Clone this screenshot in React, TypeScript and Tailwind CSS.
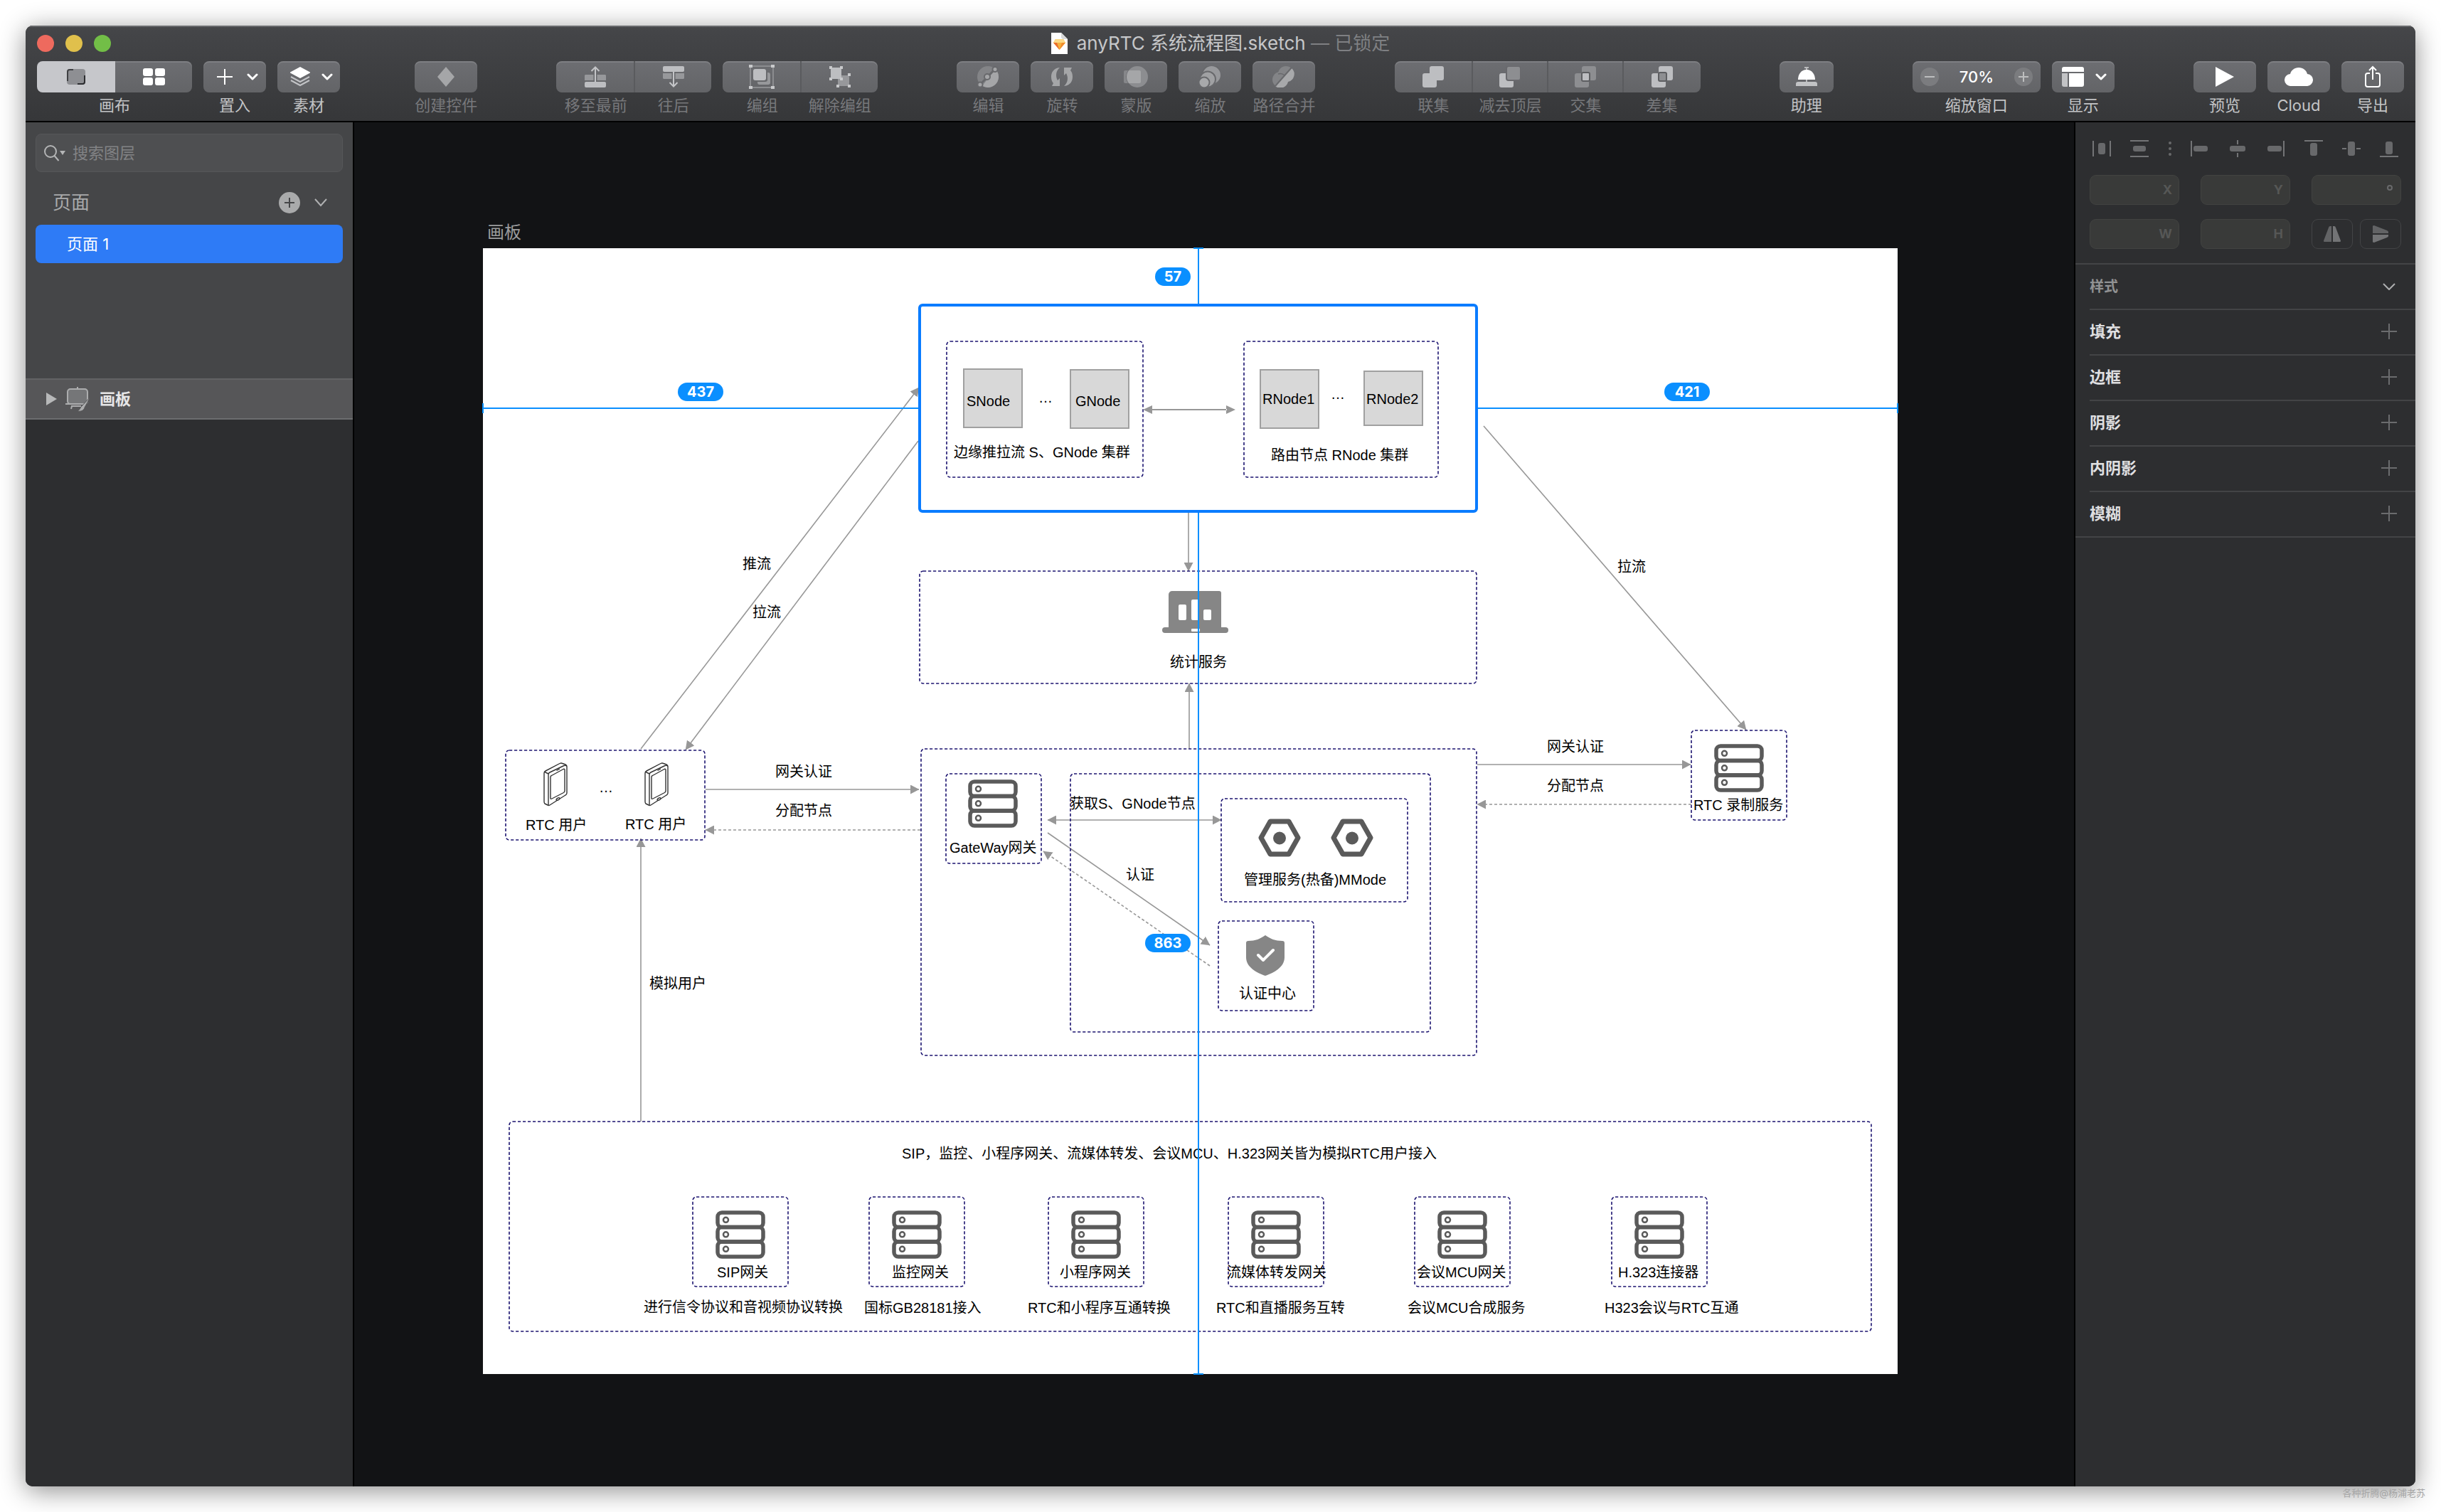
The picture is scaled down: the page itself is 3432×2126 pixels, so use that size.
import type { ReactNode } from "react";

const UI_FONT = "font-['Inter','Noto_Sans_CJK_SC',sans-serif]";
const DIAGRAM_FONT = "font-['Liberation_Sans','Noto_Sans_CJK_SC',sans-serif]";
const TILE = "flex h-11 w-full items-center bg-linear-to-b from-[#6d6e72] to-[#636467] shadow-[inset_0_2px_0_rgba(255,255,255,0.12)]";

/* ---------- toolbar ---------- */

function Tool({
  label,
  width = "w-[88px]",
  shape = "rounded-[8px]",
  dim = false,
  children,
}: {
  label: string;
  width?: string;
  shape?: string;
  dim?: boolean;
  children: ReactNode;
}) {
  return (
    <button type="button" disabled={dim} className={`flex flex-col items-center gap-1.5 ${width}`}>
      <span className={`${TILE} justify-center ${shape}`}>{children}</span>
      <span className={`text-[22px] leading-6 whitespace-nowrap ${dim ? "text-[#77787b]" : "text-[#c3c4c6]"}`}>{label}</span>
    </button>
  );
}

function Chevron() {
  return (
    <svg width="16" height="10" viewBox="0 0 16 10" fill="none" stroke="#fff" strokeWidth="3" strokeLinecap="round" strokeLinejoin="round">
      <path d="M2 2l6 6 6-6" />
    </svg>
  );
}

function CanvasIcon() {
  return (
    <svg width="28" height="24" viewBox="0 0 28 24">
      <rect x="1" y="1" width="26" height="22" rx="4" fill="#8e8f93" />
      <path d="M2 18V5a3 3 0 0 1 3-3h5" fill="none" stroke="#3f4043" strokeWidth="2" />
      <path d="M26 10v9a3 3 0 0 1-3 3h-7" fill="none" stroke="#2c2d30" strokeWidth="2" />
    </svg>
  );
}

function GridIcon() {
  return (
    <svg width="31" height="24" viewBox="0 0 31 24" fill="#fff">
      <rect width="14" height="11" rx="3" />
      <rect x="17" width="14" height="11" rx="3" />
      <rect y="13" width="14" height="11" rx="3" />
      <rect x="17" y="13" width="14" height="11" rx="3" />
    </svg>
  );
}

function PlusIcon() {
  return (
    <svg width="22" height="22" viewBox="0 0 22 22" stroke="#fff" strokeWidth="2">
      <path d="M11 0v22M0 11h22" />
    </svg>
  );
}

function LayersIcon() {
  return (
    <svg width="28" height="28" viewBox="0 0 28 28">
      <path d="M14 0l13 7a1 1 0 0 1 0 2l-13 7L1 9a1 1 0 0 1 0-2z" fill="#fff" />
      <path d="M1 14l13 7 13-7M1 19l13 7 13-7" fill="none" stroke="#c2c3c6" strokeWidth="2" />
    </svg>
  );
}

function DiamondIcon() {
  return (
    <svg width="24" height="28" viewBox="0 0 24 28" fill="#a5a6a8">
      <path d="M12 0l12 14-12 14L0 14z" />
    </svg>
  );
}

function ForwardIcon() {
  return (
    <svg width="30" height="30" viewBox="0 0 30 30">
      <path d="M1 12h11.500v8H0v-7zM17.500 12H29l1 1v7H17.500z" fill="#97989b" />
      <rect y="22" width="30" height="8" rx="2" fill="#bdbec1" />
      <path d="M15 22V2M9.500 7L15 1.500 20.500 7" fill="none" stroke="#c4c5c8" strokeWidth="2" />
    </svg>
  );
}

function BackwardIcon() {
  return (
    <svg width="30" height="30" viewBox="0 0 30 30">
      <rect width="30" height="8" rx="2" fill="#bdbec1" />
      <path d="M0 10h12.500v8H1l-1-1zM17.500 10H30v7l-1 1H17.500z" fill="#97989b" />
      <path d="M15 8v20M9.500 23l5.500 5.500 5.500-5.500" fill="none" stroke="#c4c5c8" strokeWidth="2" />
    </svg>
  );
}

function GroupIcon() {
  return (
    <svg width="36" height="34" viewBox="0 0 36 34">
      <path d="M2 2h32v30H2z" fill="none" stroke="#8b8c8f" strokeWidth="2" />
      <path d="M26 11h1a3 3 0 0 1 3 3v11a3 3 0 0 1-3 3H15a3 3 0 0 1-3-3v-1h11a3 3 0 0 0 3-3z" fill="#97989b" />
      <rect x="6" y="6" width="18" height="16" rx="3" fill="#bdbec1" />
      <path d="M0 0h5v4H0zM31 0h5v4h-5zM0 30h5v4H0zM31 30h5v4h-5z" fill="#c8c9cb" />
    </svg>
  );
}

function UngroupIcon() {
  return (
    <svg width="30" height="30" viewBox="0 0 30 30">
      <rect x="12" y="13" width="16" height="15" rx="3" fill="#97989b" />
      <rect x="2" y="2" width="15" height="16" rx="3" fill="#bdbec1" />
      <path d="M0 0h4v4H0zM15 0h4v4h-4zM0 16h4v4H0zM15 16h4v4h-4zM26 10h4v4h-4zM10 26h4v4h-4zM26 26h4v4h-4z" fill="#c8c9cb" />
    </svg>
  );
}

function EditIcon() {
  return (
    <svg width="30" height="30" viewBox="0 0 30 30">
      <circle cx="15" cy="15" r="15" fill="#838487" />
      <path d="M28 7.500A15 15 0 0 1 7 27.700L25 5z" fill="#a5a6a8" />
      <path d="M4 26L25 4" stroke="#68696c" strokeWidth="3" />
      <g fill="#a5a6a8" stroke="#68696c" strokeWidth="2">
        <circle cx="14" cy="15" r="4" />
        <circle cx="25" cy="4.500" r="3.500" />
        <circle cx="4" cy="26" r="3.500" />
      </g>
    </svg>
  );
}

function RotateIcon() {
  return (
    <svg width="32" height="28" viewBox="0 0 32 28" fill="#a5a6a8">
      <path d="M13 1C4 2 1 8 1 14c0 4 1 7 3 9l-2 4h11V16l-3 3C7 14 7 6 13 1z" />
      <path d="M19 27c9-1 12-7 12-13 0-4-1-7-3-9l2-4H19v11l3-3c3 5 3 13-3 18z" />
    </svg>
  );
}

function MaskIcon() {
  return (
    <svg width="34" height="30" viewBox="0 0 34 30">
      <path d="M2 6h4a16 16 0 0 0 0 18H2a2 2 0 0 1-2-2V8a2 2 0 0 1 2-2z" fill="#86878a" />
      <circle cx="19" cy="15" r="15" fill="#8c8d90" />
      <path d="M7 6h15a2 2 0 0 1 2 2v14a2 2 0 0 1-2 2H7a15 15 0 0 1 0-18z" fill="#a5a6a8" />
    </svg>
  );
}

function ScaleIcon() {
  return (
    <svg width="30" height="30" viewBox="0 0 30 30" stroke="#68696c" strokeWidth="2">
      <circle cx="17.500" cy="12.500" r="13.500" fill="#98999c" />
      <circle cx="12" cy="18.500" r="11" fill="#a0a1a3" />
      <circle cx="7" cy="23" r="7.500" fill="#a8a9ab" />
    </svg>
  );
}

function FlattenIcon() {
  return (
    <svg width="32" height="30" viewBox="0 0 32 30">
      <circle cx="19" cy="11" r="11" fill="#838487" />
      <circle cx="11" cy="19" r="11" fill="#838487" />
      <path d="M8 11c6-2 11 2 12 8" fill="none" stroke="#68696c" strokeWidth="1.500" />
      <path d="M27 3a11 11 0 0 1-5 19A11 11 0 0 1 4 28z" fill="#a8a9ab" />
      <path d="M27 2L4 28" stroke="#68696c" strokeWidth="2" />
    </svg>
  );
}

function BooleanIcon({ mode }: { mode: "union" | "subtract" | "intersect" | "difference" }) {
  const light = "#bdbec1";
  const dark = "#8d8e91";
  const back = mode === "union" || mode === "difference" ? light : dark;
  const front = mode === "intersect" ? dark : light;
  return (
    <svg width="30" height="30" viewBox="0 0 30 30">
      {mode === "subtract" ? (
        <>
          <rect y="10" width="20" height="20" rx="3" fill={front} />
          <rect x="10" width="20" height="20" rx="3" fill={back} stroke="#69696d" strokeWidth="2" />
        </>
      ) : (
        <>
          <rect x="10" width="20" height="20" rx="3" fill={back} />
          <rect y="10" width="20" height="20" rx="3" fill={front} />
          {mode !== "union" && (
            <rect x="10" y="9" width="11" height="12" rx="2" fill={mode === "intersect" ? light : dark} stroke="#5d5e61" strokeWidth="2" />
          )}
        </>
      )}
    </svg>
  );
}

function BellIcon() {
  return (
    <svg width="30" height="28" viewBox="0 0 30 28">
      <path d="M12 0h6v2h-2v3h-2V2h-2z" fill="#b9babc" />
      <path d="M15 4c8 0 12 7 12 14H3C3 11 7 4 15 4z" fill="#fff" />
      <path d="M14 18h2v3h-2z" fill="#b9babc" />
      <path d="M3 21h24a3 3 0 0 1 3 3v3H0v-3a3 3 0 0 1 3-3z" fill="#c2c3c5" />
    </svg>
  );
}

function ViewIcon() {
  return (
    <svg width="31" height="28" viewBox="0 0 31 28">
      <path d="M3 0h25a3 3 0 0 1 3 3v4H0V3a3 3 0 0 1 3-3z" fill="#fff" />
      <path d="M0 9h8v19H3a3 3 0 0 1-3-3z" fill="#c2c3c5" />
      <path d="M10 9h21v16a3 3 0 0 1-3 3H10z" fill="#fff" />
    </svg>
  );
}

function PlayIcon() {
  return (
    <svg width="28" height="28" viewBox="0 0 28 28" fill="#fff">
      <path d="M1 0l26 14L1 28z" />
    </svg>
  );
}

function CloudIcon() {
  return (
    <svg width="40" height="26" viewBox="0 0 40 26" fill="#fff">
      <path d="M9 26a8.500 8.500 0 0 1-1-17C9 4 14 0 20 0s11 4 12 9a8.500 8.500 0 0 1-1 17z" />
    </svg>
  );
}

function ShareIcon() {
  return (
    <svg width="24" height="32" viewBox="0 0 24 32" fill="none" stroke="#fff" strokeWidth="2">
      <path d="M8 11H5a3 3 0 0 0-3 3v13a3 3 0 0 0 3 3h14a3 3 0 0 0 3-3V14a3 3 0 0 0-3-3h-3M12 20V3M7 7l5-5 5 5" />
    </svg>
  );
}

function SketchFileIcon() {
  return (
    <svg width="24" height="32" viewBox="0 0 24 32">
      <path d="M0 1h14l9 9v21H0z" fill="#fff" />
      <path d="M14 1l9 9h-7l-2-2z" fill="#d9d9d9" />
      <path d="M6 10h11l3 5-8.500 10L3 15z" fill="#f6b13c" />
      <path d="M6 10h11l3 5H3z" fill="#fbd986" />
      <path d="M3 15h5l3.500 10z" fill="#ea6c2d" />
      <path d="M20 15h-5l-3.500 10z" fill="#f08b2c" />
    </svg>
  );
}

function Toolbar() {
  return (
    <header className="flex h-[136px] shrink-0 flex-col border-b-2 border-black bg-linear-to-b from-[#454649] to-[#363739] shadow-[inset_0_2px_0_#67686b]">
      <div className="relative flex h-[50px] items-center justify-center">
        <div className="absolute left-4 flex gap-4">
          <button type="button" aria-label="关闭" className="size-6 rounded-full bg-[#ee6a5e]" />
          <button type="button" aria-label="最小化" className="size-6 rounded-full bg-[#e0c04c]" />
          <button type="button" aria-label="缩放" className="size-6 rounded-full bg-[#72be47]" />
        </div>
        <h1 className="flex items-center gap-3 text-[26px] leading-8 text-[#c6c7c9]">
          <SketchFileIcon />
          <span>
            anyRTC 系统流程图.sketch <span className="text-[#7f8083]">— 已锁定</span>
          </span>
        </h1>
      </div>
      <div className="flex justify-between px-4">
        <div className="mr-[-6px] flex gap-4">
          <div role="group" aria-label="画布" className="flex w-[218px] flex-col items-center gap-1.5">
            <div className="flex w-full">
              <button type="button" aria-label="画布视图" className="flex h-11 w-[110px] items-center justify-center rounded-l-[8px] bg-[#c6c7cb]">
                <CanvasIcon />
              </button>
              <button type="button" aria-label="组件视图" className="flex h-11 w-[108px] items-center justify-center rounded-r-[8px] bg-linear-to-b from-[#6d6e72] to-[#636467] shadow-[inset_0_2px_0_rgba(255,255,255,0.12)]">
                <GridIcon />
              </button>
            </div>
            <span className="text-[22px] leading-6 text-[#c3c4c6]">画布</span>
          </div>
          <Tool label="置入">
            <span className="flex items-center gap-5 pl-2">
              <PlusIcon />
              <Chevron />
            </span>
          </Tool>
          <Tool label="素材">
            <span className="flex items-center gap-4 pl-2">
              <LayersIcon />
              <Chevron />
            </span>
          </Tool>
        </div>
        <Tool label="创建控件" dim>
          <DiamondIcon />
        </Tool>
        <div className="flex gap-4">
          <div className="flex">
            <Tool label="移至最前" dim width="w-[111px]" shape="rounded-l-[8px] border-r-2 border-[#5a5b5e]">
              <ForwardIcon />
            </Tool>
            <Tool label="往后" dim width="w-[107px]" shape="rounded-r-[8px]">
              <BackwardIcon />
            </Tool>
          </div>
          <div className="flex">
            <Tool label="编组" dim width="w-[111px]" shape="rounded-l-[8px] border-r-2 border-[#5a5b5e]">
              <GroupIcon />
            </Tool>
            <Tool label="解除编组" dim width="w-[107px]" shape="rounded-r-[8px]">
              <UngroupIcon />
            </Tool>
          </div>
        </div>
        <div className="flex gap-4">
          <Tool label="编辑" dim>
            <EditIcon />
          </Tool>
          <Tool label="旋转" dim>
            <RotateIcon />
          </Tool>
          <Tool label="蒙版" dim>
            <MaskIcon />
          </Tool>
          <Tool label="缩放" dim>
            <ScaleIcon />
          </Tool>
          <Tool label="路径合并" dim>
            <FlattenIcon />
          </Tool>
        </div>
        <div className="flex">
          <Tool label="联集" dim width="w-[110px]" shape="rounded-l-[8px] border-r-2 border-[#5a5b5e]">
            <BooleanIcon mode="union" />
          </Tool>
          <Tool label="减去顶层" dim width="w-[106px]" shape="border-r-2 border-[#5a5b5e]">
            <BooleanIcon mode="subtract" />
          </Tool>
          <Tool label="交集" dim width="w-[106px]" shape="border-r-2 border-[#5a5b5e]">
            <BooleanIcon mode="intersect" />
          </Tool>
          <Tool label="差集" dim width="w-[108px]" shape="rounded-r-[8px]">
            <BooleanIcon mode="difference" />
          </Tool>
        </div>
        <Tool label="助理" width="w-[76px]">
          <BellIcon />
        </Tool>
        <div className="flex gap-4">
          <div role="group" aria-label="缩放窗口" className="flex w-[180px] flex-col items-center gap-1.5">
            <div className={`${TILE} justify-between rounded-[8px] px-[11px]`}>
              <button type="button" aria-label="缩小" className="flex size-[26px] items-center justify-center rounded-full bg-[#7b7c7f]">
                <svg width="14" height="14" viewBox="0 0 14 14" stroke="#bdbebf" strokeWidth="2">
                  <path d="M0 7h14" />
                </svg>
              </button>
              <span className="text-[22px] leading-6 font-medium text-white">70%</span>
              <button type="button" aria-label="放大" className="flex size-[26px] items-center justify-center rounded-full bg-[#7b7c7f]">
                <svg width="14" height="14" viewBox="0 0 14 14" stroke="#bdbebf" strokeWidth="2">
                  <path d="M0 7h14M7 0v14" />
                </svg>
              </button>
            </div>
            <span className="text-[22px] leading-6 text-[#c3c4c6]">缩放窗口</span>
          </div>
          <Tool label="显示">
            <span className="flex items-center gap-4 pl-1">
              <ViewIcon />
              <Chevron />
            </span>
          </Tool>
        </div>
        <div className="flex gap-4">
          <Tool label="预览">
            <PlayIcon />
          </Tool>
          <Tool label="Cloud">
            <CloudIcon />
          </Tool>
          <Tool label="导出">
            <ShareIcon />
          </Tool>
        </div>
      </div>
    </header>
  );
}

/* ---------- left sidebar ---------- */

function Sidebar() {
  return (
    <aside className="flex w-[462px] shrink-0 flex-col border-r-2 border-black bg-[#2d2e30]">
      <div className="flex h-[360px] flex-col bg-[#454648] px-[14px] pt-4">
        <label className="flex h-[54px] items-center gap-2 rounded-[8px] border border-[#565759] bg-[#4e4f51] px-[11px]">
          <svg width="32" height="24" viewBox="0 0 32 24" fill="none" stroke="#b4b5b6" strokeWidth="2">
            <circle cx="9" cy="10" r="8" />
            <path d="M14.500 16l6 7" />
            <path d="M22 9h8l-4 6z" fill="#b4b5b6" stroke="none" />
          </svg>
          <input type="search" aria-label="搜索图层" placeholder="搜索图层" className="min-w-0 flex-1 bg-transparent text-[22px] leading-8 text-white outline-none placeholder:text-[#828385]" />
        </label>
        <div className="flex h-[74px] items-center justify-between pt-3 pr-[22px] pl-6">
          <h2 className="text-[26px] leading-8 text-[#a9aaab]">页面</h2>
          <div className="flex items-center gap-5">
            <button type="button" aria-label="添加页面">
              <svg width="30" height="30" viewBox="0 0 30 30">
                <circle cx="15" cy="15" r="15" fill="#a9aaab" />
                <path d="M15 8v14M8 15h14" stroke="#454648" strokeWidth="2" />
              </svg>
            </button>
            <button type="button" aria-label="收起页面">
              <svg width="18" height="12" viewBox="0 0 18 12" fill="none" stroke="#b0b1b2" strokeWidth="2">
                <path d="M1 1l8 9 8-9" />
              </svg>
            </button>
          </div>
        </div>
        <button type="button" className="flex h-[54px] items-center rounded-[8px] bg-[#2e7bf6] px-11 text-[22px] leading-8 text-white">页面 1</button>
      </div>
      <button type="button" className="flex h-[58px] items-center border-y-2 border-t-[#626365] border-b-[#6c6d6f] bg-[#565658] pl-7">
        <svg width="16" height="18" viewBox="0 0 16 18" fill="#b7b8b9">
          <path d="M1 0l15 9-15 9z" />
        </svg>
        <svg className="ml-3" width="36" height="36" viewBox="0 0 36 36">
          <rect x="3" y="4" width="28" height="21" rx="4" fill="#757678" stroke="#acadae" strokeWidth="2" />
          <path d="M17 1v3M0 25h26M8 28h14M9 28l-1 4" stroke="#acadae" strokeWidth="2" fill="none" />
          <path d="M35 15l-12 13c-2 1-2 5-6 7 5 1 9-1 10-5z" fill="#acadae" stroke="#565658" strokeWidth="1" />
        </svg>
        <span className="ml-3 text-[22px] leading-8 font-bold text-[#e6e6e7]">画板</span>
      </button>
    </aside>
  );
}

/* ---------- canvas ---------- */

function DashedBox({ at }: { at: string }) {
  return (
    <div className={`absolute ${at}`}>
      <svg className="block size-full overflow-visible">
        <rect x="0" y="0" width="100%" height="100%" rx="5" fill="none" stroke="#1c1470" strokeWidth="1.600" strokeDasharray="4.200 2.800" />
      </svg>
    </div>
  );
}

function Label({ at, children }: { at: string; children: ReactNode }) {
  return <span className={`absolute text-[20px] leading-6 whitespace-nowrap text-black ${at}`}>{children}</span>;
}

function NodeSquare({ at }: { at: string }) {
  return <div className={`absolute border-2 border-[#a0a0a0] bg-[#d8d8d8] ${at}`} />;
}

function Badge({ at, children }: { at: string; children: ReactNode }) {
  return (
    <span className={`absolute flex h-[26px] items-center justify-center rounded-full bg-[#0a8fff] font-['Inter',sans-serif] text-[20px] leading-6 font-bold text-white ${at}`}>
      {children}
    </span>
  );
}

function ServerIcon({ at }: { at: string }) {
  return (
    <svg className={`absolute ${at}`} width="70" height="68" viewBox="0 0 70 68" fill="none" stroke="#5a5a5a">
      <rect x="3" y="3" width="64" height="20.500" rx="6" strokeWidth="5.500" />
      <rect x="3" y="23.500" width="64" height="20.500" rx="6" strokeWidth="5.500" />
      <rect x="3" y="44" width="64" height="21" rx="6" strokeWidth="5.500" />
      <g strokeWidth="2.500">
        <circle cx="14.500" cy="13.300" r="3.500" />
        <circle cx="14.500" cy="33.800" r="3.500" />
        <circle cx="14.500" cy="54.300" r="3.500" />
      </g>
    </svg>
  );
}

function PhoneIcon({ at }: { at: string }) {
  return (
    <svg className={`absolute ${at}`} width="34" height="62" viewBox="0 0 34 62" fill="#fff" stroke="#333" strokeWidth="1.400" strokeLinejoin="round">
      <path d="M1 15q0-2 2-3L23 1.500q2-1 4 0l4 1.500q2 1 2 3V43q0 2-2 3L9 60q-1.500 1-3 0L2 58q-1-1-1-3z" />
      <path d="M7 60V17q0-2 2-3L29 4.500q3-1 4 1M7 16l-5-2.500" fill="none" />
      <path d="M10 20.500q0-1.500 1.500-2L28 9.500q2-.8 2 1V40q0 1.500-1.500 2.500L12 51q-2 1-2-1z" />
      <path d="M18.500 11.500l4.500-2.500M18 52.500q0-1.500 2.500-2.500 2-1 2.500.5 0 1.500-2.500 2.500-2 1-2.500-.5z" />
    </svg>
  );
}

function HexIcon({ at }: { at: string }) {
  return (
    <svg className={`absolute ${at}`} width="60" height="54" viewBox="0 0 60 54">
      <path d="M17 4h26l13 23-13 23H17L4 27z" fill="none" stroke="#5a5a5a" strokeWidth="7" strokeLinejoin="round" />
      <circle cx="30" cy="27.500" r="9" fill="#5a5a5a" />
    </svg>
  );
}

function StatsIcon({ at }: { at: string }) {
  return (
    <svg className={`absolute ${at}`} width="93" height="60" viewBox="0 0 93 60" fill="#868686">
      <path d="M14 0h66a3 3 0 0 1 3 3v51H9V5a5 5 0 0 1 5-5z" />
      <rect y="51" width="93" height="8" rx="4" />
      <g fill="#fff">
        <rect x="23" y="19" width="11" height="22" rx="2" />
        <rect x="41" y="12" width="11" height="29" rx="2" />
        <rect x="58" y="26" width="11" height="15" rx="2" />
        <rect x="41" y="53" width="12" height="4" rx="1" />
      </g>
    </svg>
  );
}

function ShieldIcon({ at }: { at: string }) {
  return (
    <svg className={`absolute ${at}`} width="56" height="57" viewBox="0 0 56 57">
      <path d="M28 0c7 5 14 8 24 8q3 0 3 3v20c0 14-15 22-27 26C16 53 1 45 1 31V11q0-3 3-3c10 0 17-3 24-8z" fill="#868686" />
      <path d="M18 28l7 7 14-14" fill="none" stroke="#fff" strokeWidth="4" strokeLinecap="round" strokeLinejoin="round" />
    </svg>
  );
}

function Connectors() {
  return (
    <svg className="absolute inset-0 size-full" viewBox="0 0 1989 1583" fill="none" stroke="#979797" strokeWidth="1.600">
      <defs>
        <marker id="arrow" markerUnits="userSpaceOnUse" markerWidth="13" markerHeight="13" refX="12" refY="6.500" orient="auto-start-reverse">
          <path d="M0 0l12.500 6.500L0 13z" fill="#979797" stroke="none" />
        </marker>
      </defs>
      <g markerEnd="url(#arrow)">
        <path d="M222 704L613 196" />
        <path d="M612 271L285 705" />
        <path d="M1407 250L1776 677" />
        <path d="M992 372v82" />
        <path d="M993 704v-92" />
        <path d="M313 761h300" />
        <path d="M1398 726h300" />
        <path d="M222 1228V830" />
        <path d="M794 822l228 158" />
        <path d="M615 818H313" strokeDasharray="4 3" />
        <path d="M1699 782h-301" strokeDasharray="4 3" />
        <path d="M1022 1009L788 848" strokeDasharray="4 3" />
        <path d="M794 804h244" markerStart="url(#arrow)" />
      </g>
    </svg>
  );
}

function Guides() {
  return (
    <svg className="absolute inset-0 size-full overflow-visible" viewBox="0 0 1989 1583" fill="none" stroke="#0a8fff" strokeWidth="2">
      <path d="M1006 0v78M999 0h14M1006 372v1211M999 1583h14" />
      <path d="M0 225h612M0 218v14M1399 225h590M1989 218v14" />
    </svg>
  );
}

function Diagram() {
  return (
    <div className={`relative h-[1583px] w-[1989px] bg-white ${DIAGRAM_FONT}`}>
      <Connectors />

      <div className="absolute top-[78px] left-[612px] h-[294px] w-[787px] rounded-[6px] border-4 border-[#0a7cff] bg-white" />
      <DashedBox at="left-[652px] top-[131px] w-[276px] h-[191px]" />
      <DashedBox at="left-[1070px] top-[131px] w-[273px] h-[191px]" />
      <NodeSquare at="left-[675px] top-[169px] size-[84px]" />
      <NodeSquare at="left-[825px] top-[170px] size-[84px]" />
      <NodeSquare at="left-[1092px] top-[170px] size-[84px]" />
      <NodeSquare at="left-[1238px] top-[172px] w-[84px] h-[78px]" />
      <Label at="left-[680px] top-[203px]">SNode</Label>
      <Label at="left-[781px] top-[198px]">…</Label>
      <Label at="left-[833px] top-[203px]">GNode</Label>
      <Label at="left-[1096px] top-[200px]">RNode1</Label>
      <Label at="left-[1192px] top-[193px]">…</Label>
      <Label at="left-[1242px] top-[200px]">RNode2</Label>
      <Label at="left-[662px] top-[275px]">边缘推拉流 S、GNode 集群</Label>
      <Label at="left-[1108px] top-[279px]">路由节点 RNode 集群</Label>
      <svg className="absolute top-[220px] left-[928px]" width="130" height="14" viewBox="0 0 130 14" fill="#979797">
        <path d="M0 7l13-6v12zM130 7l-13-6v12zM12 6h106v2H12z" />
      </svg>

      <DashedBox at="left-[614px] top-[454px] w-[783px] h-[158px]" />
      <StatsIcon at="left-[955px] top-[482px]" />
      <Label at="left-[966px] top-[570px]">统计服务</Label>

      <Label at="left-[365px] top-[432px]">推流</Label>
      <Label at="left-[379px] top-[500px]">拉流</Label>
      <Label at="left-[1595px] top-[436px]">拉流</Label>

      <DashedBox at="left-[32px] top-[706px] w-[280px] h-[126px]" />
      <PhoneIcon at="left-[85px] top-[723px]" />
      <PhoneIcon at="left-[227px] top-[723px]" />
      <Label at="left-[163px] top-[746px]">…</Label>
      <Label at="left-[60px] top-[799px]">RTC 用户</Label>
      <Label at="left-[200px] top-[798px]">RTC 用户</Label>
      <Label at="left-[411px] top-[724px]">网关认证</Label>
      <Label at="left-[411px] top-[779px]">分配节点</Label>
      <Label at="left-[234px] top-[1022px]">模拟用户</Label>

      <DashedBox at="left-[616px] top-[704px] w-[781px] h-[431px]" />
      <DashedBox at="left-[651px] top-[739px] w-[134px] h-[126px]" />
      <ServerIcon at="left-[682px] top-[747px]" />
      <Label at="left-[656px] top-[831px]">GateWay网关</Label>
      <DashedBox at="left-[826px] top-[739px] w-[506px] h-[363px]" />
      <Label at="left-[825px] top-[769px]">获取S、GNode节点</Label>
      <DashedBox at="left-[1038px] top-[774px] w-[262px] h-[145px]" />
      <HexIcon at="left-[1090px] top-[802px]" />
      <HexIcon at="left-[1192px] top-[802px]" />
      <Label at="left-[1070px] top-[876px]">管理服务(热备)MMode</Label>
      <Label at="left-[904px] top-[869px]">认证</Label>
      <DashedBox at="left-[1034px] top-[946px] w-[134px] h-[126px]" />
      <ShieldIcon at="left-[1072px] top-[966px]" />
      <Label at="left-[1063px] top-[1036px]">认证中心</Label>

      <Label at="left-[1496px] top-[689px]">网关认证</Label>
      <Label at="left-[1496px] top-[744px]">分配节点</Label>
      <DashedBox at="left-[1699px] top-[678px] w-[134px] h-[126px]" />
      <ServerIcon at="left-[1731px] top-[697px]" />
      <Label at="left-[1702px] top-[771px]">RTC 录制服务</Label>

      <DashedBox at="left-[37px] top-[1228px] w-[1915px] h-[295px]" />
      <Label at="left-[589px] top-[1261px]">SIP，监控、小程序网关、流媒体转发、会议MCU、H.323网关皆为模拟RTC用户接入</Label>

      <DashedBox at="left-[295px] top-[1334px] w-[134px] h-[126px]" />
      <ServerIcon at="left-[327px] top-[1353px]" />
      <Label at="left-[329px] top-[1428px]">SIP网关</Label>
      <Label at="left-[226px] top-[1477px]">进行信令协议和音视频协议转换</Label>

      <DashedBox at="left-[543px] top-[1334px] w-[134px] h-[126px]" />
      <ServerIcon at="left-[575px] top-[1353px]" />
      <Label at="left-[575px] top-[1428px]">监控网关</Label>
      <Label at="left-[536px] top-[1478px]">国标GB28181接入</Label>

      <DashedBox at="left-[795px] top-[1334px] w-[134px] h-[126px]" />
      <ServerIcon at="left-[827px] top-[1353px]" />
      <Label at="left-[811px] top-[1428px]">小程序网关</Label>
      <Label at="left-[766px] top-[1478px]">RTC和小程序互通转换</Label>

      <DashedBox at="left-[1048px] top-[1334px] w-[134px] h-[126px]" />
      <ServerIcon at="left-[1080px] top-[1353px]" />
      <Label at="left-[1046px] top-[1428px]">流媒体转发网关</Label>
      <Label at="left-[1031px] top-[1478px]">RTC和直播服务互转</Label>

      <DashedBox at="left-[1310px] top-[1334px] w-[134px] h-[126px]" />
      <ServerIcon at="left-[1342px] top-[1353px]" />
      <Label at="left-[1313px] top-[1428px]">会议MCU网关</Label>
      <Label at="left-[1300px] top-[1478px]">会议MCU合成服务</Label>

      <DashedBox at="left-[1587px] top-[1334px] w-[134px] h-[126px]" />
      <ServerIcon at="left-[1619px] top-[1353px]" />
      <Label at="left-[1596px] top-[1428px]">H.323连接器</Label>
      <Label at="left-[1577px] top-[1478px]">H323会议与RTC互通</Label>

      <Guides />
      <Badge at="left-[945px] top-[27px] w-[50px]">57</Badge>
      <Badge at="left-[274px] top-[189px] w-[64px]">437</Badge>
      <Badge at="left-[1661px] top-[189px] w-[64px]">421</Badge>
      <Badge at="left-[931px] top-[964px] w-[64px]">863</Badge>
    </div>
  );
}

/* ---------- inspector ---------- */

const ALIGN_ICONS = [
  { name: "水平分布", lines: "M1 1v22M25 1v22", block: [8, 4, 10, 16] },
  { name: "垂直分布", lines: "M0 1h26M0 23h26", block: [4, 8, 18, 8] },
  { name: "左对齐", lines: "M1 1v22", block: [4, 8, 20, 8] },
  { name: "水平居中", lines: "M13 0v6M13 18v6", block: [2, 8, 22, 8] },
  { name: "右对齐", lines: "M25 1v22", block: [2, 8, 20, 8] },
  { name: "顶部对齐", lines: "M0 1h26", block: [8, 4, 10, 18] },
  { name: "垂直居中", lines: "M0 12h6M20 12h6", block: [8, 2, 10, 20] },
  { name: "底部对齐", lines: "M0 23h26", block: [8, 2, 10, 18] },
];

function AlignButton({ icon }: { icon: (typeof ALIGN_ICONS)[number] }) {
  const [x, y, w, h] = icon.block;
  return (
    <button type="button" disabled aria-label={icon.name}>
      <svg width="26" height="24" viewBox="0 0 26 24">
        <path d={icon.lines} stroke="#737476" strokeWidth="2" />
        <rect x={x} y={y} width={w} height={h} rx="3" fill="#68696b" />
      </svg>
    </button>
  );
}

function Field({ label, name }: { label: string; name: string }) {
  return (
    <label className="flex h-[42px] items-center rounded-[9px] border border-[#424341] bg-[#393a39] pr-[9px] pl-3 font-['Inter',sans-serif] text-[18px] leading-6 font-bold text-[#565756]">
      <input type="text" disabled aria-label={name} className="w-0 min-w-0 flex-1 bg-transparent outline-none" />
      {label}
    </label>
  );
}

function Inspector() {
  return (
    <aside className="w-[480px] shrink-0 border-l-2 border-black bg-[#2d2e30]">
      <div className="h-[200px] border-b-2 border-[#434446] px-5 pt-[25px]">
        <div className="flex items-center justify-between pr-1 pl-1">
          <AlignButton icon={ALIGN_ICONS[0]} />
          <AlignButton icon={ALIGN_ICONS[1]} />
          <svg width="4" height="22" viewBox="0 0 4 22" fill="#68696b">
            <circle cx="2" cy="3" r="2" />
            <circle cx="2" cy="11" r="2" />
            <circle cx="2" cy="19" r="2" />
          </svg>
          {ALIGN_ICONS.slice(2).map((icon) => (
            <AlignButton key={icon.name} icon={icon} />
          ))}
        </div>
        <div className="mt-[25px] grid grid-cols-3 gap-x-[30px] gap-y-5">
          <Field label="X" name="X 坐标" />
          <Field label="Y" name="Y 坐标" />
          <label className="flex h-[42px] items-center rounded-[9px] border border-[#424341] bg-[#393a39] pr-[10px] pl-3">
            <input type="text" disabled aria-label="旋转角度" className="w-0 min-w-0 flex-1 bg-transparent outline-none" />
            <svg width="10" height="16" viewBox="0 0 10 16" fill="none" stroke="#68696b" strokeWidth="2">
              <circle cx="5" cy="5" r="3" />
            </svg>
          </label>
          <Field label="W" name="宽度" />
          <Field label="H" name="高度" />
          <div className="grid grid-cols-2 gap-[10px]">
            <button type="button" disabled aria-label="水平翻转" className="flex h-[42px] items-center justify-center rounded-[9px] border border-[#434446]">
              <svg width="24" height="22" viewBox="0 0 24 22">
                <path d="M9 0h2v22H1q-1 0-1-1.500L7 2q.5-2 2-2z" fill="#626365" />
                <path d="M15 0h-2v22h10q1 0 1-1.500L17 2q-.5-2-2-2z" fill="#737476" />
              </svg>
            </button>
            <button type="button" disabled aria-label="垂直翻转" className="flex h-[42px] items-center justify-center rounded-[9px] border border-[#434446]">
              <svg width="22" height="24" viewBox="0 0 22 24">
                <path d="M0 1q0-1 2-1l18 7q2 1 2 2v2H0z" fill="#626365" />
                <path d="M0 23q0 1 2 1l18-7q2-1 2-2v-2H0z" fill="#737476" />
              </svg>
            </button>
          </div>
        </div>
      </div>
      <div className="border-b-2 border-[#434446] pl-5">
        <div className="flex h-16 items-center justify-between border-b-2 border-[#434446] pr-7">
          <h2 className="text-[20px] leading-8 font-bold text-[#919293]">样式</h2>
          <button type="button" aria-label="收起样式">
            <svg width="18" height="10" viewBox="0 0 18 10" fill="none" stroke="#aeafb0" strokeWidth="2">
              <path d="M1 1l8 8 8-8" />
            </svg>
          </button>
        </div>
        {["填充", "边框", "阴影", "内阴影", "模糊"].map((name) => (
          <div key={name} className="flex h-16 items-center justify-between border-b-2 border-[#434446] pr-[26px] pb-0.5 last:h-[62px] last:border-b-0">
            <h3 className="text-[22px] leading-8 font-bold text-[#dfdfe0]">{name}</h3>
            <button type="button" aria-label={`添加${name}`}>
              <svg width="22" height="22" viewBox="0 0 22 22" stroke="#6b6c6e" strokeWidth="2">
                <path d="M11 0v22M0 11h22" />
              </svg>
            </button>
          </div>
        ))}
      </div>
    </aside>
  );
}

export default function App() {
  return (
    <div className={`relative flex min-h-screen flex-col bg-white p-9 ${UI_FONT}`}>
      <div className="flex flex-1 flex-col overflow-hidden rounded-[10px] bg-[#121315] shadow-[0_6px_36px_rgba(0,0,0,0.45)]">
        <Toolbar />
        <div className="flex flex-1">
          <Sidebar />
          <main className="min-w-0 flex-1 overflow-hidden bg-[#121315] pt-[137px] pl-[181px]">
            <h2 className="mb-1 flex h-9 items-center pl-[6px] text-[24px] leading-8 text-[#9b9c9d]">画板</h2>
            <Diagram />
          </main>
          <Inspector />
        </div>
      </div>
      <p className="absolute right-[22px] bottom-[18px] text-[13px] leading-[18px] text-[#a5a5a5]">各种折腾@杨浦老苏</p>
    </div>
  );
}
